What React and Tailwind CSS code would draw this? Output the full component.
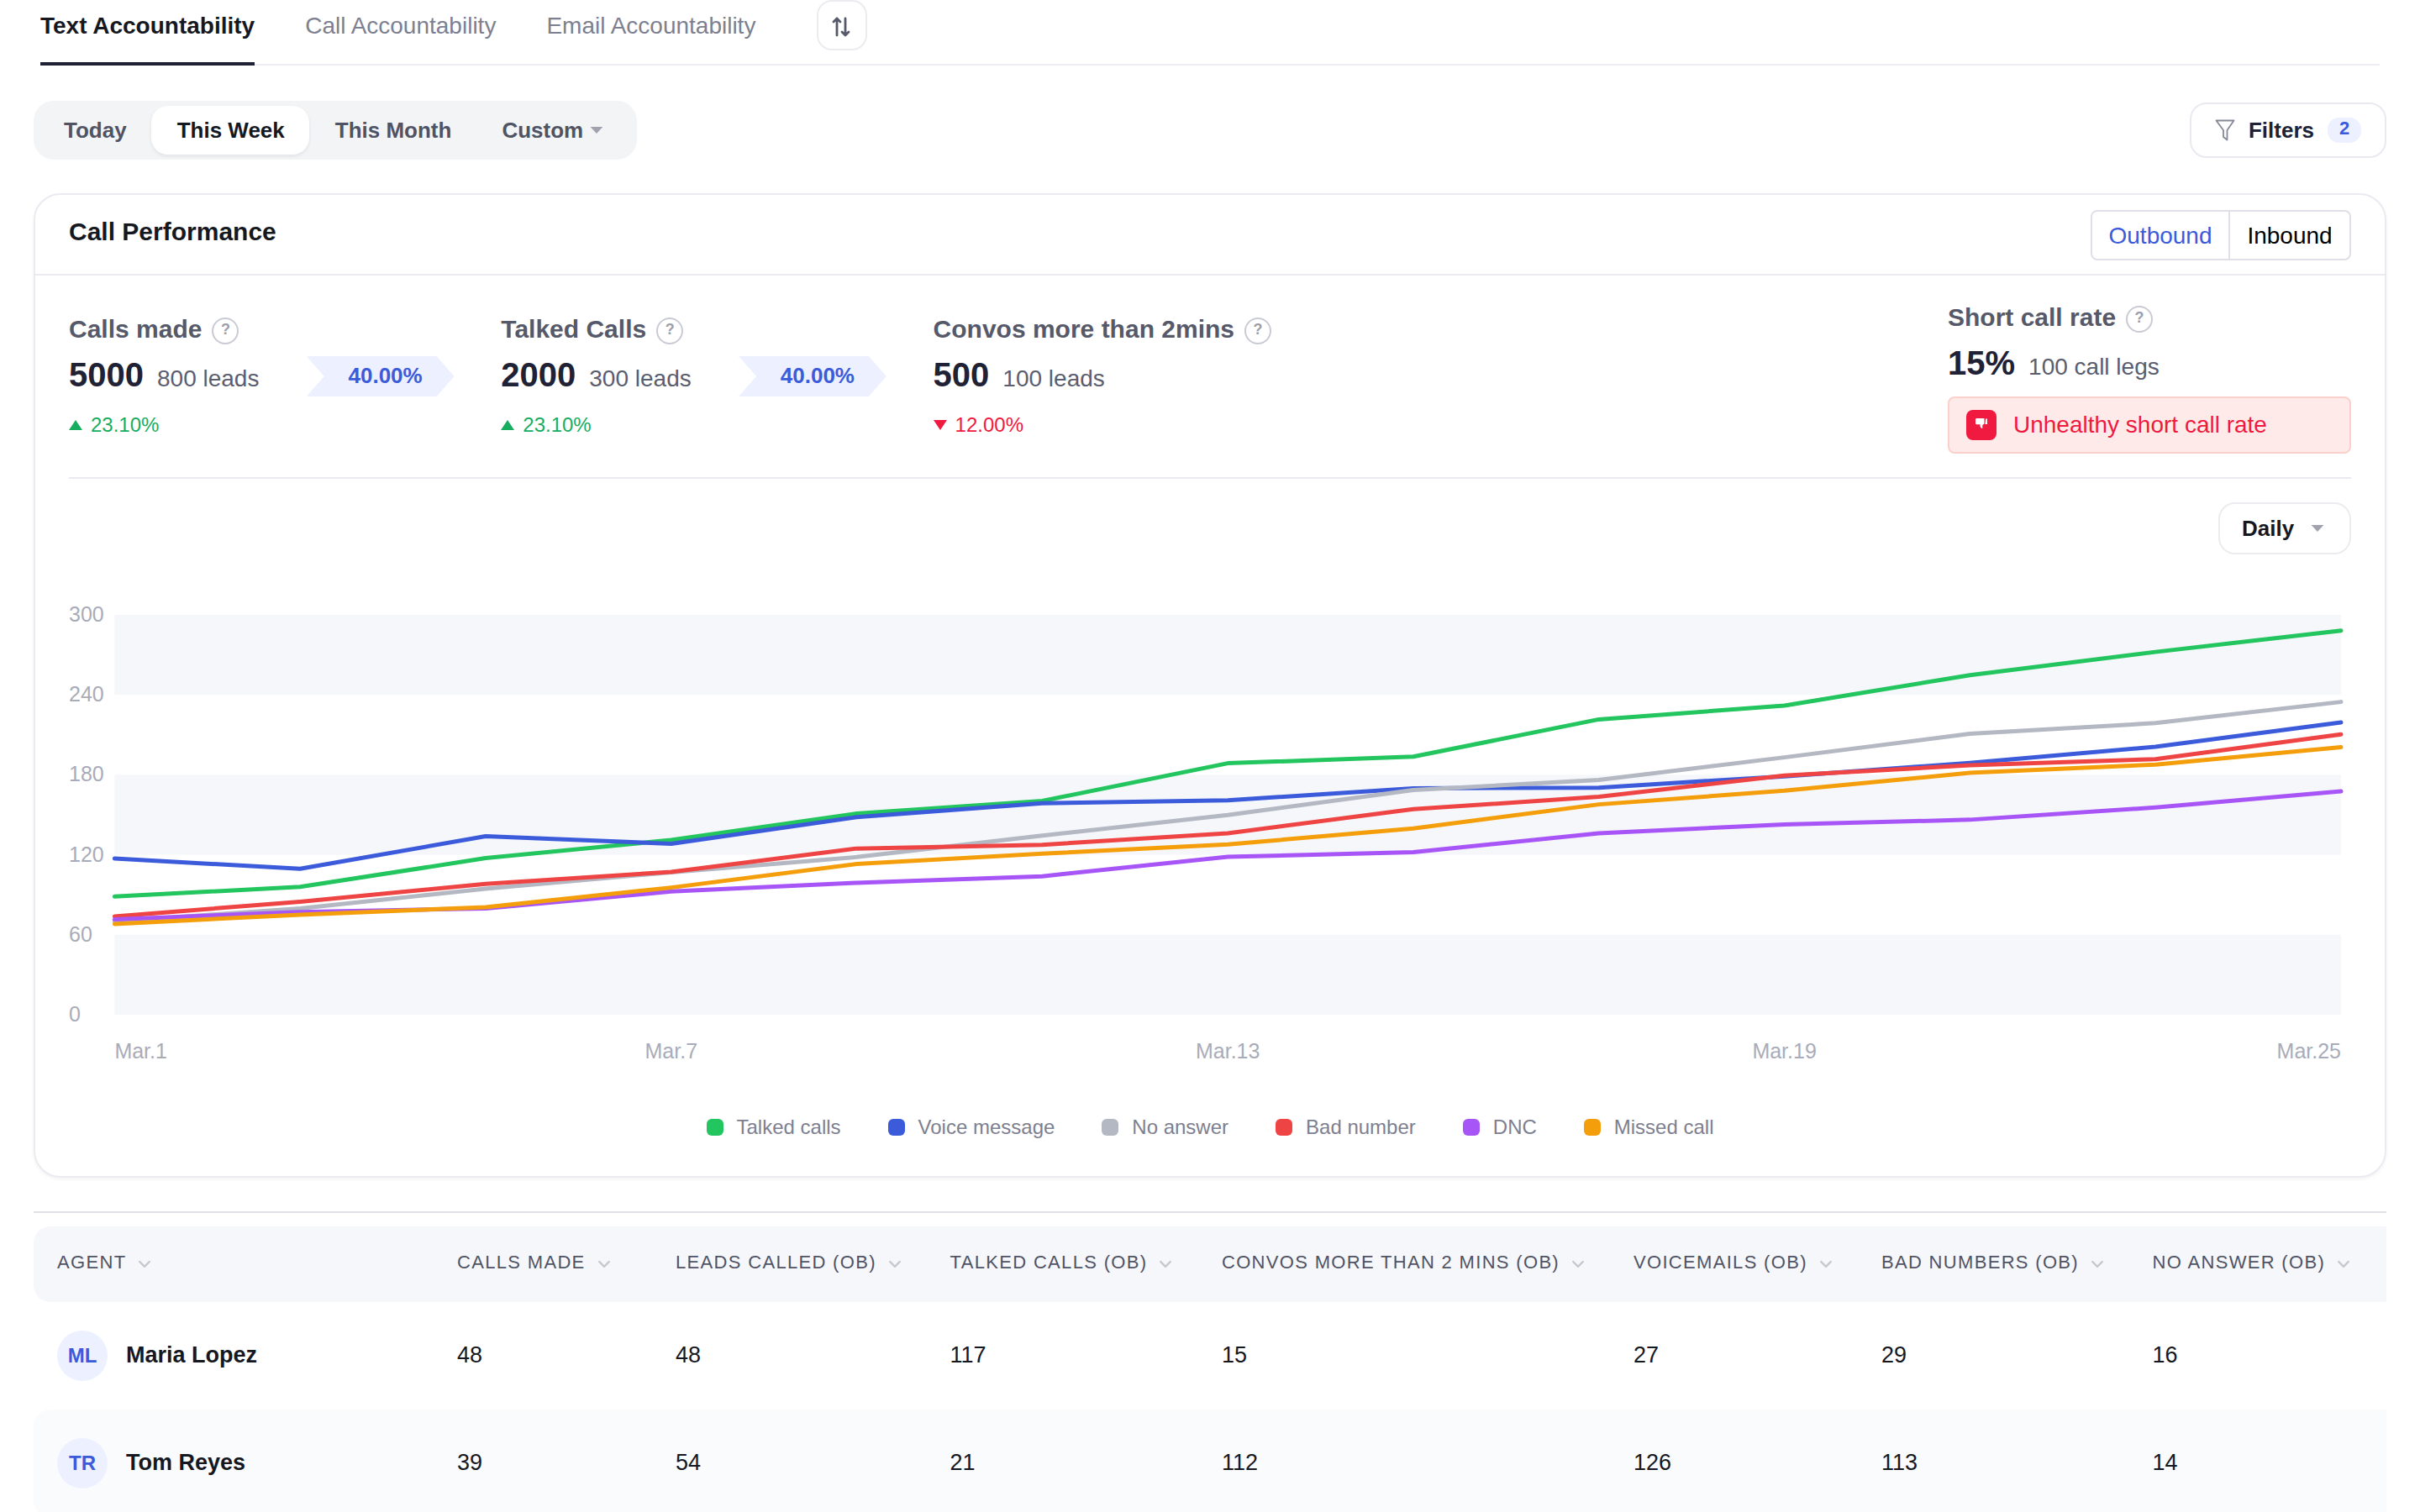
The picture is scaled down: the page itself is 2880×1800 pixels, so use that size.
import React from "react";

const tabs = [
  { label: "Text Accountability", active: true },
  { label: "Call Accountability" },
  { label: "Email Accountability" },
];

const stats = [
  { title: "Calls made", value: "5000", sub: "800 leads", trend: "23.10%", up: true, rate: "40.00%" },
  { title: "Talked Calls", value: "2000", sub: "300 leads", trend: "23.10%", up: true, rate: "40.00%" },
  { title: "Convos more than 2mins", value: "500", sub: "100 leads", trend: "12.00%", up: false },
];

const series = [
  {
    name: "Talked calls",
    color: "#22c55e",
    swatch: "bg-[#22c55e]",
    data: [88.7, 95.9, 117.5, 131.1, 150.9, 160.4, 188.7, 193.6, 221.6, 231.9, 254.8, 272.2, 288.2],
  },
  {
    name: "Voice message",
    color: "#3b5bdb",
    swatch: "bg-[#3b5bdb]",
    data: [117.2, 109.5, 133.9, 128.3, 148.3, 158.6, 160.9, 169.9, 170.4, 178.9, 188.9, 201, 219.3],
  },
  {
    name: "No answer",
    color: "#b4b8c2",
    swatch: "bg-[#b4b8c2]",
    data: [70, 79.7, 94.6, 106.9, 118.3, 134.4, 149.9, 168.6, 176.1, 193.1, 210.8, 218.8, 234.7],
  },
  {
    name: "Bad number",
    color: "#ef4444",
    swatch: "bg-[#ef4444]",
    data: [73.8, 84.8, 98.2, 107.2, 124.7, 127.5, 136.2, 154.2, 163.5, 179.4, 187.2, 191.8, 210.3],
  },
  {
    name: "DNC",
    color: "#a855f7",
    swatch: "bg-[#a855f7]",
    data: [71.5, 77.1, 79.7, 92.5, 99, 103.9, 118.5, 121.9, 136.2, 142.7, 146.3, 155.5, 167.6],
  },
  {
    name: "Missed call",
    color: "#f59e0b",
    swatch: "bg-[#f59e0b]",
    data: [68.1, 75, 80.7, 95.4, 113.1, 120.8, 127.8, 139.8, 157.8, 168.1, 181.5, 187.7, 200.8],
  },
];

const columns = [
  "Agent",
  "Calls made",
  "Leads called (OB)",
  "Talked calls (OB)",
  "Convos more than 2 mins (OB)",
  "Voicemails (OB)",
  "Bad numbers (OB)",
  "No answer (OB)",
];

const agents = [
  { initials: "ML", name: "Maria Lopez", values: [48, 48, 117, 15, 27, 29, 16] },
  { initials: "TR", name: "Tom Reyes", values: [39, 54, 21, 112, 126, 113, 14] },
];

const gridCols =
  "grid grid-cols-[476px_260px_326.600px_323.400px_490px_295px_322.600px_1fr] pl-7";

const SortIcon = () => (
  <svg width="28" height="28" viewBox="0 0 28 28" fill="none" stroke="#555969" strokeWidth="2.8" strokeLinecap="round" strokeLinejoin="round">
    <path d="M8 25V5M4 9l4-4 4 4" />
    <path d="M18 5v20M14 21l4 4 4-4" />
  </svg>
);

const FunnelIcon = () => (
  <svg width="24" height="26" viewBox="0 0 24 26" fill="none" stroke="#858896" strokeWidth="1.8" strokeLinejoin="round">
    <path d="M1.500 1.500h21l-8 11.500v11.500l-4.500-3.500v-8z" />
  </svg>
);

const ThumbDownIcon = () => (
  <svg width="14" height="12" viewBox="0 0 14 12" fill="#fff">
    <path d="M1.500 0h9v6.500L8.300 8v4C6.500 12 5.500 10.500 5.500 9V7.200H1.200C.3 7.200 0 6.500 0 5.500v-4C0 .500.500 0 1.500 0z" />
    <path d="M12 .500h2v6.500h-2.500z" />
  </svg>
);

const Chevron = () => (
  <svg width="16" height="10" viewBox="0 0 16 10" fill="none" stroke="#c6c8d0" strokeWidth="2.4" strokeLinecap="round" strokeLinejoin="round">
    <path d="M2.200 2 8 7.800 13.800 2" />
  </svg>
);

const Caret = () => (
  <svg width="16" height="8" viewBox="0 0 16 8" fill="#a0a2ad">
    <path d="M.600 0h14.800L8 8z" />
  </svg>
);

const Help = () => (
  <span className="flex h-8 w-8 shrink-0 justify-center rounded-full border-2 border-[#c9cbd4] text-[18px] leading-6 font-bold text-[#9b9eab]">
    ?
  </span>
);

const Tabs = () => (
  <nav className="mx-2 flex h-[78px] border-b-2 border-[#eeeff4]">
    {tabs.map((tab) => (
      <a
        key={tab.label}
        className={
          tab.active
            ? "mr-[60px] h-[78px] border-b-4 border-[#1f2235] text-[28px] leading-[61px] font-bold text-[#16181f]"
            : "mr-[60px] h-[78px] text-[28px] leading-[61px] text-[#7d8090]"
        }
      >
        {tab.label}
      </a>
    ))}
    <button className="ml-[13px] flex h-[60px] w-[60px] items-center justify-center rounded-[18px] border-2 border-[#ececf0] pt-[2px]">
      <SortIcon />
    </button>
  </nav>
);

const Toolbar = () => (
  <div className="mt-[42px] flex items-center justify-between">
    <div className="flex h-[70px] rounded-[24px] bg-[#f3f4f6] p-1.5 text-[26px] leading-[58px] font-bold text-[#4f5364]">
      <span className="pr-[29px] pl-[30px]">Today</span>
      <span className="mr-px rounded-[20px] bg-white pr-[29px] pl-[31px] text-[#16181f] shadow-[0_2px_4px_rgba(16,24,40,0.08)]">
        This Week
      </span>
      <span className="px-[30px]">This Month</span>
      <span className="flex items-center gap-2 pr-[34px] pl-[30px]">
        Custom
        <Caret />
      </span>
    </div>
    <button className="flex h-[66px] items-center rounded-[20px] border-2 border-[#e9eaf0] px-7 text-[26px] font-bold text-[#1f2235]">
      <FunnelIcon />
      <span className="ml-4">Filters</span>
      <span className="ml-4 h-[30px] w-10 rounded-[14px] bg-[#edf1ff] text-center text-[22px] leading-[26px] text-[#3b5bdb]">
        2
      </span>
    </button>
  </div>
);

const Stat = ({ stat }) => (
  <div className="flex w-[514.300px]">
    <div className="w-[282.600px] whitespace-nowrap">
      <div className="flex h-8 items-center gap-3 text-[30px] leading-8 font-bold text-[#555969]">
        <span className="pb-[4px]">{stat.title}</span>
        <Help />
      </div>
      <div className="mt-[12px] flex items-baseline gap-4 leading-[48px]">
        <span className="text-[40px] font-bold text-[#1f2235]">{stat.value}</span>
        <span className="text-[28px] text-[#5a5e6f]">{stat.sub}</span>
      </div>
      <div
        className={
          stat.up
            ? "mt-[15px] flex items-center gap-[10px] text-[24px] leading-8 text-[#17ad60]"
            : "mt-[15px] flex items-center gap-[10px] text-[24px] leading-8 text-[#f0193f]"
        }
      >
        <svg width="16" height="12" viewBox="0 0 16 12" fill="currentColor">
          <path d={stat.up ? "M0 12h16L8 0z" : "M0 0h16L8 12z"} />
        </svg>
        {stat.trend}
      </div>
    </div>
    {stat.rate && (
      <div className="mt-[46px] h-12 w-[176px] bg-[#edf1ff] pl-3 text-center text-[26px] leading-[46px] font-bold text-[#3b5bdb] [clip-path:polygon(0_0,88%_0,100%_50%,88%_100%,0_100%,12%_50%)]">
        {stat.rate}
      </div>
    )}
  </div>
);

const ShortCallRate = () => (
  <div className="ml-auto w-[480px]">
    <div className="flex h-8 items-center gap-3 text-[30px] leading-8 font-bold text-[#555969]">
      <span className="pb-[4px]">Short call rate</span>
      <Help />
    </div>
    <div className="mt-[12px] flex items-baseline gap-4 leading-[48px]">
      <span className="text-[40px] font-bold text-[#1f2235]">15%</span>
      <span className="text-[28px] text-[#5a5e6f]">100 call legs</span>
    </div>
    <div className="mt-[11px] flex h-[68px] items-center gap-5 rounded-[8px] border-2 border-[#fbd0cb] bg-[#feebe9] px-5 text-[28px] text-[#f0193f]">
      <span className="flex h-9 w-9 items-center justify-center rounded-[8px] bg-[#f0193f] pb-[5px]">
        <ThumbDownIcon />
      </span>
      Unhealthy short call rate
    </div>
  </div>
);

const LineChart = () => {
  const px = (i) => 54.4 + (i * 2649.6) / 12;
  const py = (v) => 492 - (v / 300) * 476;
  return (
    <svg width="2716" height="570" viewBox="0 0 2716 570" className="mt-14 block" fontSize="25" fill="#a9acb8">
      {[300, 180, 60].map((v) => (
        <rect key={v} x={px(0)} y={py(v)} width="2649.6" height="95.2" fill="#f6f7fb" />
      ))}
      {[300, 240, 180, 120, 60, 0].map((v) => (
        <text key={v} x="0" y={py(v) + 8}>
          {v}
        </text>
      ))}
      {["Mar.1", "Mar.7", "Mar.13", "Mar.19", "Mar.25"].map((label, i) => (
        <text key={label} x={px(i * 3)} y="544" textAnchor={i === 0 ? "start" : i === 4 ? "end" : "middle"}>
          {label}
        </text>
      ))}
      {series.map((s) => (
        <polyline
          key={s.name}
          points={s.data.map((v, i) => `${px(i)},${py(v)}`).join(" ")}
          fill="none"
          stroke={s.color}
          strokeWidth="5"
          strokeLinecap="round"
          strokeLinejoin="round"
        />
      ))}
    </svg>
  );
};

const CallPerformance = () => (
  <section className="mt-10 h-[1172px] rounded-[32px] border-2 border-[#eaebf0] shadow-[0_2px_4px_rgba(16,24,40,0.05)]">
    <div className="flex h-24 justify-between border-b-2 border-[#eaebf0] px-10">
      <h2 className="text-[30px] leading-[88px] font-bold text-[#16181f]">Call Performance</h2>
      <div className="mt-[18px] flex h-[60px] rounded-[8px] border-2 border-[#dfe0e7] text-[28px] leading-[58px]">
        <span className="w-[164px] border-r-2 border-[#dfe0e7] text-center text-[#3b5bdb]">Outbound</span>
        <span className="w-[142px] text-center text-black">Inbound</span>
      </div>
    </div>
    <div className="px-10">
      <div className="flex h-[242px] border-b-2 border-[#eaebf0] pt-9">
        <div className="flex pt-[14px]">
          {stats.map((stat) => (
            <Stat key={stat.title} stat={stat} />
          ))}
        </div>
        <ShortCallRate />
      </div>
      <div className="mt-7 flex justify-end">
        <button className="flex h-[62px] w-[158px] items-center justify-between rounded-[20px] border-2 border-[#ececf0] pr-[30px] pl-[26px] text-[26px] font-bold text-[#16181f]">
          Daily
          <Caret />
        </button>
      </div>
      <LineChart />
      <div className="mt-[42px] flex justify-center gap-14 text-[24px] leading-7 text-[#7d8090]">
        {series.map((s) => (
          <span key={s.name} className="flex items-center gap-4">
            <i className={`h-5 w-5 rounded-[6px] ${s.swatch}`} />
            {s.name}
          </span>
        ))}
      </div>
    </div>
  </section>
);

const AgentTable = () => (
  <div className="mt-10 border-t-2 border-[#e1e2e8] pt-4">
    <div className={`${gridCols} h-[90px] items-center rounded-l-[20px] bg-[#f6f7fb] text-[22px] tracking-[0.06em] text-[#4f5364] uppercase`}>
      {columns.map((col) => (
        <span key={col} className="flex items-center gap-[14px] whitespace-nowrap">
          <span className="pb-[6px]">{col}</span>
          <Chevron />
        </span>
      ))}
    </div>
    {agents.map((agent, i) => (
      <div
        key={agent.name}
        className={`${gridCols} h-32 items-center text-[27px] text-[#16181f] ${i % 2 ? "rounded-l-[20px] bg-[#fafbfd]" : ""}`}
      >
        <span className="flex items-center gap-[22px] font-bold">
          <span className="flex h-[60px] w-[60px] items-center justify-center rounded-full bg-[#edf1ff] text-[24px] text-[#3b5bdb]">
            {agent.initials}
          </span>
          <span className="pb-[2px]">{agent.name}</span>
        </span>
        {agent.values.map((value, j) => (
          <span key={j} className="pb-[2px]">
            {value}
          </span>
        ))}
      </div>
    ))}
  </div>
);

export default function App() {
  return (
    <div className="h-[1800px] w-[2880px] overflow-hidden bg-white px-10 font-['Liberation_Sans',Arial,sans-serif]">
      <Tabs />
      <Toolbar />
      <CallPerformance />
      <AgentTable />
    </div>
  );
}
